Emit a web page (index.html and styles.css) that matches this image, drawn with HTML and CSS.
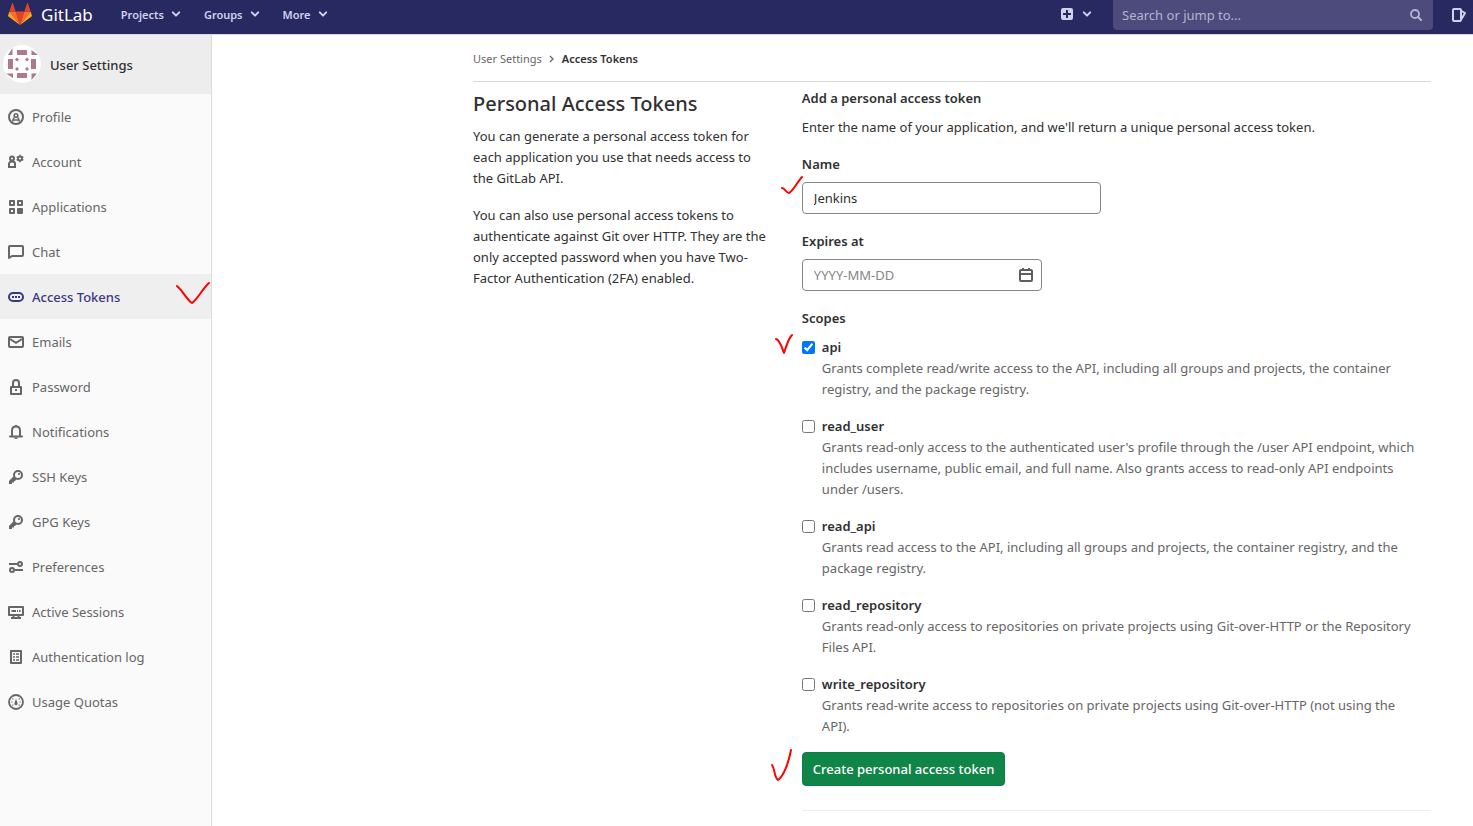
FILE: index.html
```html
<!DOCTYPE html>
<html lang="en">
<head>
<meta charset="utf-8">
<title>Access Tokens · User Settings · GitLab</title>
<link rel="stylesheet" href="styles.css">
</head>
<body>
<svg class="sprite" aria-hidden="true">
  <symbol id="chevron" viewBox="0 0 10 10"><path d="M1.8 3.4 5 6.6l3.200-3.200" fill="none" stroke="currentColor" stroke-width="2" stroke-linecap="round" stroke-linejoin="round"/></symbol>
  <symbol id="key" viewBox="0 0 16 16"><path fill="currentColor" fill-rule="evenodd" d="M10 1a5 5 0 1 0 0 10 5 5 0 0 0 0-10zm0 2a3 3 0 1 1 0 6 3 3 0 0 1 0-6z"/><path fill="currentColor" d="M5.300 7.500 8.500 10.700 6.800 12H6v1.500H4V15H1v-3z"/><circle cx="11" cy="5" r="1.100" fill="currentColor"/></symbol>
</svg>

<header class="navbar">
  <a class="brand" href="#">
    <svg class="logo" viewBox="0 0 24 22" aria-hidden="true">
      <path fill="#e24329" d="M12 22 16.400 8.400H7.600z"/>
      <path fill="#fc6d26" d="M12 22 7.600 8.400H1.400z"/>
      <path fill="#fca326" d="M1.400 8.400.1 12.500c-.1.400 0 .8.300 1L12 22z"/>
      <path fill="#e24329" d="M1.400 8.400h6.200L4.900.3c-.1-.4-.7-.4-.8 0z"/>
      <path fill="#fc6d26" d="M12 22l4.400-13.600h6.200z"/>
      <path fill="#fca326" d="M22.600 8.400l1.300 4.100c.1.400 0 .8-.3 1L12 22z"/>
      <path fill="#e24329" d="M22.600 8.400h-6.200L19.100.3c.1-.4.700-.4.800 0z"/>
    </svg>
    <span>GitLab</span>
  </a>
  <nav class="menu" aria-label="Main">
    <button type="button">Projects <svg class="caret"><use href="#chevron"/></svg></button>
    <button type="button">Groups <svg class="caret"><use href="#chevron"/></svg></button>
    <button type="button">More <svg class="caret"><use href="#chevron"/></svg></button>
  </nav>
  <button type="button" class="create" aria-label="New">
    <svg class="plus" viewBox="0 0 12 12"><path fill="currentColor" fill-rule="evenodd" d="M2 0h8a2 2 0 0 1 2 2v8a2 2 0 0 1-2 2H2a2 2 0 0 1-2-2V2a2 2 0 0 1 2-2zm3 2v3H2v2h3v3h2V7h3V5H7V2z"/></svg>
    <svg class="caret"><use href="#chevron"/></svg>
  </button>
  <form class="search">
    <input type="search" aria-label="Search" placeholder="Search or jump to...">
    <svg viewBox="0 0 12 12" aria-hidden="true"><circle cx="5" cy="5" r="4" fill="none" stroke="currentColor" stroke-width="1.800"/><path d="m8 8 3 3" stroke="currentColor" stroke-width="2" stroke-linecap="round"/></svg>
  </form>
  <a class="issues" href="#" aria-label="Issues">
    <svg viewBox="0 0 14 14"><rect x="1" y="1" width="8" height="12" rx="1" fill="none" stroke="currentColor" stroke-width="2"/><path d="m9.500 3 3.500 2-3.500 6" fill="none" stroke="currentColor" stroke-width="2" stroke-linejoin="round"/></svg>
  </a>
</header>

<div class="page">
  <aside class="sidebar">
    <a class="context" href="#">
      <svg class="avatar" viewBox="0 0 38 38" aria-hidden="true">
        <circle cx="19" cy="19" r="19" fill="#fff"/>
        <g fill="#ad7a8d"><path d="M14 5h10v5H14zM14 28h10v5H14zM5 14h5v10H5zM28 14h5v10h-5zM9.500 3v7H5zM28.500 5 35 10h-6.500zM3 28.500h7V33zM28.500 28.500H34L28.500 35z"/><path d="m14 12.500 2 2-2 2-2-2zM24 12.500l2 2-2 2-2-2zM14 22l2 2-2 2-2-2zM24 22l2 2-2 2-2-2z"/></g>
      </svg>
      <span>User Settings</span>
    </a>
    <nav aria-label="User settings">
      <ul class="links">
        <li><a href="#"><svg viewBox="0 0 16 16"><circle cx="8" cy="8" r="7" fill="none" stroke="currentColor" stroke-width="2"/><circle cx="8" cy="6.500" r="1.800" fill="none" stroke="currentColor" stroke-width="1.600"/><path d="M4.500 12.500 6 8.500M11.500 12.500 10 8.500M5 11h6" fill="none" stroke="currentColor" stroke-width="1.600"/></svg>Profile</a></li>
        <li><a href="#"><svg viewBox="0 0 16 16"><circle cx="4" cy="4.500" r="2" fill="none" stroke="currentColor" stroke-width="2"/><path d="M1 13V9.800C1 8.500 2.200 7.600 4 7.600s3 .9 3 2.200V13z" fill="none" stroke="currentColor" stroke-width="2"/><circle cx="12" cy="4.500" r="2" fill="none" stroke="currentColor" stroke-width="1.800"/><path d="M12 .8v2M12 6.200v2M8.700 2.700l1.600.9M13.700 5.400l1.600.9M8.700 6.300l1.600-.9M13.700 3.600l1.600-.9" stroke="currentColor" stroke-width="1.600"/></svg>Account</a></li>
        <li><a href="#"><svg viewBox="0 0 16 16"><path d="M2 2h4v4H2zM10 2h4v4h-4zM2 10h4v4H2z" fill="none" stroke="currentColor" stroke-width="2" stroke-linejoin="round"/><rect x="9" y="9" width="6" height="6" rx="1" fill="currentColor"/></svg>Applications</a></li>
        <li><a href="#"><svg viewBox="0 0 16 16"><path d="M1 14V3a1 1 0 0 1 1-1h12a1 1 0 0 1 1 1v8a1 1 0 0 1-1 1H4z" fill="none" stroke="currentColor" stroke-width="2" stroke-linejoin="round"/></svg>Chat</a></li>
        <li class="active"><a href="#" aria-current="page"><svg viewBox="0 0 16 16"><rect x="1" y="4" width="14" height="8" rx="4" fill="none" stroke="currentColor" stroke-width="2"/><path d="M4 7h2v2H4zM7 7h2v2H7zM10 7h2v2h-2z" fill="currentColor"/></svg>Access Tokens</a>
          <svg class="tick tick-nav" viewBox="0 0 36 24" aria-hidden="true"><path d="M2 5C8 10 12 19 17 22 22 19 28 7 34 2"/></svg></li>
        <li><a href="#"><svg viewBox="0 0 16 16"><rect x="1" y="3" width="14" height="10" rx="1" fill="none" stroke="currentColor" stroke-width="2"/><path d="m2 5 6 3.800L14 5" fill="none" stroke="currentColor" stroke-width="2"/></svg>Emails</a></li>
        <li><a href="#"><svg viewBox="0 0 16 16"><path d="M3 8h10v7H3zM5 7V4a3 3 0 0 1 6 0v3" fill="none" stroke="currentColor" stroke-width="2" stroke-linejoin="round"/><path d="M7 10h2v2H7z" fill="currentColor"/></svg>Password</a></li>
        <li><a href="#"><svg viewBox="0 0 16 16"><path d="M2 12.500h12M4 12V6.500C4 4 5.500 2.500 8 2.500S12 4 12 6.500V12" fill="none" stroke="currentColor" stroke-width="2" stroke-linecap="round"/><path d="M7 1h2v2H7zM6 13.500h4L9 15H7z" fill="currentColor"/></svg>Notifications</a></li>
        <li><a href="#"><svg><use href="#key"/></svg>SSH Keys</a></li>
        <li><a href="#"><svg><use href="#key"/></svg>GPG Keys</a></li>
        <li><a href="#"><svg viewBox="0 0 16 16"><path d="M1 5h8M7 11h8" stroke="currentColor" stroke-width="2"/><circle cx="12" cy="5" r="2" fill="none" stroke="currentColor" stroke-width="2"/><circle cx="4" cy="11" r="2" fill="none" stroke="currentColor" stroke-width="2"/></svg>Preferences</a></li>
        <li><a href="#"><svg viewBox="0 0 16 16"><rect x="1" y="3" width="14" height="8" fill="none" stroke="currentColor" stroke-width="2" stroke-linejoin="round"/><path d="M3.500 7H8M9 7h1M11 7h1.500M3 14h10M5.500 12v2M10.500 12v2" stroke="currentColor" stroke-width="2"/></svg>Active Sessions</a></li>
        <li><a href="#"><svg viewBox="0 0 16 16"><path d="M3 2h10v12H3z" fill="none" stroke="currentColor" stroke-width="2" stroke-linejoin="round"/><path d="M5 5h2M8 5h3M5 8h2M8 8h3M5 11h2M8 11h3" stroke="currentColor" stroke-width="1.500"/></svg>Authentication log</a></li>
        <li><a href="#"><svg viewBox="0 0 16 16"><circle cx="8" cy="8" r="7" fill="none" stroke="currentColor" stroke-width="1.800"/><path d="M8 4.500 9.500 9a1.600 1.600 0 1 1-3 0z" fill="currentColor"/><path d="M3.200 8h1.200M11.600 8h1.200M4.500 4.500l.8.8M11.500 4.500l-.8.800M4.500 11.500l.8-.8M11.500 11.500l-.8-.8" stroke="currentColor" stroke-width="1.200"/></svg>Usage Quotas</a></li>
      </ul>
    </nav>
  </aside>

  <main class="content">
    <nav class="breadcrumbs" aria-label="Breadcrumbs">
      <a href="#">User Settings</a>
      <svg class="separator" viewBox="0 0 8 8" aria-hidden="true"><path d="m2 1 3 3-3 3" fill="none" stroke="currentColor" stroke-width="1.300"/></svg>
      <a class="current" href="#">Access Tokens</a>
    </nav>
    <div class="columns">
      <section class="about">
        <h1>Personal Access Tokens</h1>
        <p>You can generate a personal access token for each application you use that needs access to the GitLab API.</p>
        <p>You can also use personal access tokens to authenticate against Git over HTTP. They are the only accepted password when you have Two-Factor Authentication (2FA) enabled.</p>
      </section>
      <section class="editor">
        <form>
          <h2>Add a personal access token</h2>
          <p class="intro">Enter the name of your application, and we'll return a unique personal access token.</p>
          <div class="field">
            <label for="name">Name</label>
            <div class="control name">
              <input id="name" type="text" value="Jenkins">
              <svg class="tick tick-name" viewBox="0 0 24 20" aria-hidden="true"><path d="M2 13c3 0 4 5 7 5 4-2 9-12 13-16"/></svg>
            </div>
          </div>
          <div class="field">
            <label for="expires">Expires at</label>
            <div class="control date">
              <input id="expires" type="text" placeholder="YYYY-MM-DD">
              <svg class="calendar" viewBox="0 0 16 16" aria-hidden="true"><rect x="2" y="3" width="12" height="11" rx="1" fill="none" stroke="currentColor" stroke-width="2"/><path d="M2 7h12M5 1v3M11 1v3" stroke="currentColor" stroke-width="2"/></svg>
            </div>
          </div>
          <fieldset>
            <legend>Scopes</legend>
            <div class="scope">
              <input id="api" type="checkbox" checked>
              <label for="api">api</label>
              <p>Grants complete read/write access to the API, including all groups and projects, the container registry, and the package registry.</p>
              <svg class="tick tick-api" viewBox="0 0 20 22" aria-hidden="true"><path d="M2 6c4 1 6 9 8 14C12 14 14 6 18 2"/></svg>
            </div>
            <div class="scope">
              <input id="read_user" type="checkbox">
              <label for="read_user">read_user</label>
              <p>Grants read-only access to the authenticated user's profile through the /user API endpoint, which includes username, public email, and full name. Also grants access to read-only API endpoints under /users.</p>
            </div>
            <div class="scope">
              <input id="read_api" type="checkbox">
              <label for="read_api">read_api</label>
              <p>Grants read access to the API, including all groups and projects, the container registry, and the package registry.</p>
            </div>
            <div class="scope">
              <input id="read_repository" type="checkbox">
              <label for="read_repository">read_repository</label>
              <p>Grants read-only access to repositories on private projects using Git-over-HTTP or the Repository Files API.</p>
            </div>
            <div class="scope">
              <input id="write_repository" type="checkbox">
              <label for="write_repository">write_repository</label>
              <p>Grants read-write access to repositories on private projects using Git-over-HTTP (not using the API).</p>
            </div>
          </fieldset>
          <div class="actions">
            <button type="submit">Create personal access token</button>
            <svg class="tick tick-submit" viewBox="0 0 24 34" aria-hidden="true"><path d="M2 17c3 4 2 12 6 15 6-4 11-19 13-30"/></svg>
          </div>
        </form>
        <hr>
      </section>
    </div>
  </main>
</div>
</body>
</html>
```
FILE: styles.css
```css
* { box-sizing: border-box; }

body {
  margin: 0;
  min-height: 100vh;
  display: flex;
  flex-direction: column;
  font-family: "Noto Sans", "Open Sans", sans-serif;
  font-size: 13px;
  line-height: 21px;
  color: #303030;
  background: #fff;
}

a { color: inherit; text-decoration: none; }
button, input { font: inherit; color: inherit; }
h1, h2, p, ul, fieldset, legend { margin: 0; padding: 0; }
.sprite { display: none; }

/* Top bar */
.navbar {
  display: flex;
  align-items: center;
  height: 35px;
  padding: 0 7px 4px 8px;
  background: #292961;
  border-bottom: 1px solid #dbdbdb;
  color: #d1d1f0;
}
.brand { display: flex; align-items: center; gap: 9px; padding-bottom: 2px; color: #fff; font-size: 17px; }
.logo { width: 24px; height: 22px; }
.menu { display: flex; gap: 23px; margin-left: 28px; padding-bottom: 2px; }
.navbar button {
  display: flex;
  align-items: center;
  gap: 7px;
  padding: 0;
  border: 0;
  background: none;
  font-size: 11px;
  font-weight: 600;
}
.caret { width: 10px; height: 10px; }
.navbar .create { gap: 9px; margin-left: auto; padding-bottom: 2px; }
.plus { width: 12px; height: 12px; }
.search {
  display: flex;
  align-items: center;
  width: 320px;
  height: 30px;
  margin: 0 19px 0 21px;
  padding: 0 11px 0 9px;
  background: #4d4b7c;
  border-radius: 0 0 4px 4px;
  color: #b5b4d3;
}
.search input { flex: 1; min-width: 0; padding: 0; border: 0; outline: 0; background: none; }
.search input::placeholder { color: #b5b4d3; }
.search svg { width: 12px; height: 12px; }
.issues svg { display: block; width: 14px; height: 14px; }

/* Sidebar */
.page { flex: 1; display: flex; }
.sidebar { flex: none; width: 212px; background: #fafafa; border-right: 1px solid #dbdbdb; }
.context {
  display: flex;
  align-items: center;
  gap: 9px;
  height: 59px;
  padding: 1px 0 0 3px;
  background: #ededed;
  font-weight: 500;
}
.avatar { width: 38px; height: 38px; margin-bottom: 2px; }
.links { list-style: none; }
.links li { position: relative; }
.links a {
  display: flex;
  align-items: center;
  gap: 8px;
  height: 45px;
  padding: 1px 8px 0;
  color: #666;
}
.links a svg { width: 16px; height: 16px; }
.links .active { background: #efefef; }
.links .active a { color: #393982; font-weight: 500; }

/* Content */
.content { flex: 1; max-width: 1000px; margin-left: auto; padding: 13px 42px 15px 0; }
.breadcrumbs {
  display: flex;
  align-items: center;
  gap: 6px;
  height: 34px;
  padding-bottom: 12px;
  border-bottom: 1px solid #dbdbdb;
  font-size: 11px;
  color: #666;
}
.breadcrumbs .current { color: #303030; font-weight: 600; }
.separator { width: 8px; height: 8px; }
.columns { display: grid; grid-template-columns: 19fr 40fr; gap: 30px; padding-top: 6px; }
.about { padding-top: 4px; }
.about h1 { margin-bottom: 10px; font-size: 20px; font-weight: 500; line-height: 24px; }
.about p { margin-bottom: 16px; }

/* Token form */
.editor h2, .editor label, .editor legend { font-size: 13px; font-weight: 600; line-height: 21px; }
.editor h2 { margin-bottom: 8px; }
.intro { margin-bottom: 16px; }
.field { margin-bottom: 17px; }
.field label { display: block; margin-bottom: 7px; }
.control { position: relative; }
.name { width: 299px; }
.date { width: 240px; }
.control input {
  display: block;
  width: 100%;
  height: 32px;
  padding: 0 11px;
  border: 1px solid #868686;
  border-radius: 4px;
  background: #fff;
}
.control input::placeholder { color: #868686; }
.calendar { position: absolute; top: 8px; right: 8px; width: 16px; height: 16px; color: #5e5e5e; }
fieldset { border: 0; }
legend { margin-bottom: 8px; }
.scope {
  position: relative;
  display: grid;
  grid-template-columns: 13px 1fr;
  column-gap: 7px;
  align-items: center;
  margin-bottom: 16px;
  padding-right: 8px;
}
.scope:last-child { margin-bottom: 15px; }
.scope input { width: 13px; height: 13px; margin: 0; }
.scope p { grid-column: 2; color: #666; }
.scope label { justify-self: start; }
.actions { position: relative; }
.actions button {
  height: 34px;
  padding: 0 10px;
  border: 1px solid #0e7d43;
  border-radius: 4px;
  background: #108548;
  color: #fff;
  font-weight: 500;
}
hr { margin: 24px 0 0; border: 0; border-top: 1px solid #eee; }

/* Hand-drawn red ticks laid over the page */
.tick { position: absolute; fill: none; stroke: #f00; stroke-width: 2; stroke-linecap: round; stroke-linejoin: round; }
.tick-nav { top: 7px; left: 175px; width: 36px; height: 24px; }
.tick-name { top: -7px; left: -22px; width: 24px; height: 20px; }
.tick-api { top: -4px; left: -28px; width: 20px; height: 22px; }
.tick-submit { top: -4px; left: -32px; width: 24px; height: 34px; }
```
